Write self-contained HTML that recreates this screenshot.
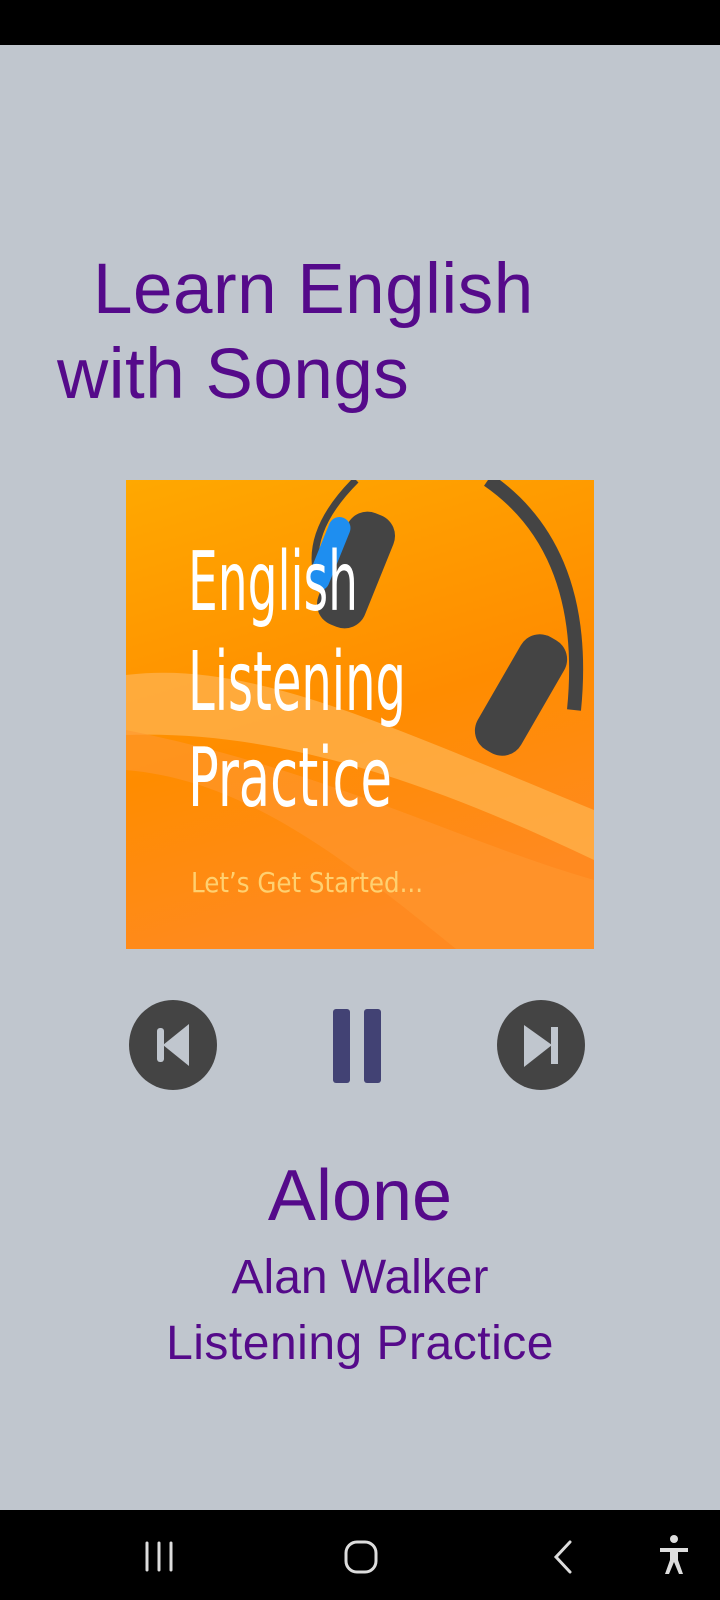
<!DOCTYPE html>
<html><head><meta charset="utf-8"><style>
body{margin:0;width:720px;height:1600px;background:#c0c6ce;position:relative;overflow:hidden;font-family:"Liberation Sans",Roboto,sans-serif;color:#550a8a}
.t{position:absolute;white-space:nowrap;line-height:1}
</style></head><body>
<div style="position:absolute;left:0;top:0;width:720px;height:45px;background:#000"></div>
<div class="t" style="left:93px;top:254px;font-size:71px;letter-spacing:0.5px">Learn English</div>
<div class="t" style="left:57px;top:339px;font-size:71px;letter-spacing:0.5px">with Songs</div>

<svg style="position:absolute;left:126px;top:480px" width="468" height="469" viewBox="0 0 468 469">
<defs><linearGradient id="g" x1="0" y1="0" x2="0.3" y2="1"><stop offset="0" stop-color="#ffa800"/><stop offset="0.6" stop-color="#ff8c00"/><stop offset="1" stop-color="#ff8a20"/></linearGradient></defs>
<rect width="468" height="469" fill="url(#g)"/>
<path d="M0 195 C120 180 250 240 468 330 L468 380 C300 300 150 250 0 255Z" fill="#ffb04a" opacity="0.8"/>
<path d="M0 290 C120 300 220 380 330 469 L468 469 L468 400 C330 360 200 290 0 250Z" fill="#ff9830" opacity="0.6"/>
<path d="M230 0 C200 30 185 60 190 90" stroke="#444" stroke-width="7" fill="none"/>
<path d="M362 0 C420 40 460 110 448 230" stroke="#444" stroke-width="14" fill="none"/>
<rect x="205" y="30" width="50" height="120" rx="22" fill="#444" transform="rotate(22 230 90)"/>
<rect x="192" y="35" width="22" height="78" rx="11" fill="#1e8ef0" transform="rotate(22 203 74)"/>
<rect x="370" y="150" width="50" height="130" rx="22" fill="#444" transform="rotate(30 395 215)"/>
<text x="62" y="130" font-family="DejaVu Sans Condensed,Liberation Sans Narrow,sans-serif" font-size="82" fill="#fff" textLength="170" lengthAdjust="spacingAndGlyphs">English</text>
<text x="62" y="230" font-family="DejaVu Sans Condensed,Liberation Sans Narrow,sans-serif" font-size="82" fill="#fff" textLength="218" lengthAdjust="spacingAndGlyphs">Listening</text>
<text x="62" y="326" font-family="DejaVu Sans Condensed,Liberation Sans Narrow,sans-serif" font-size="82" fill="#fff" textLength="204" lengthAdjust="spacingAndGlyphs">Practice</text>
<text x="65" y="412" font-family="DejaVu Sans Condensed,Liberation Sans,sans-serif" font-size="28" fill="#ffd070" textLength="232" lengthAdjust="spacingAndGlyphs">Let’s Get Started...</text>
</svg>

<svg style="position:absolute;left:0;top:990px" width="720" height="115">
<ellipse cx="173" cy="55" rx="44" ry="45" fill="#444"/>
<rect x="157" y="38" width="7" height="34" rx="3" fill="#c0c6ce"/>
<path d="M163 55 L189 34 L189 76Z" fill="#c0c6ce"/>
<rect x="333" y="19" width="17" height="74" rx="3" fill="#424274"/>
<rect x="364" y="19" width="17" height="74" rx="3" fill="#424274"/>
<ellipse cx="541" cy="55" rx="44" ry="45" fill="#444"/>
<rect x="551" y="37" width="7" height="37" fill="#c0c6ce"/>
<path d="M524 35 L552 55 L524 77Z" fill="#c0c6ce"/>
</svg>

<div class="t" style="left:0;width:720px;text-align:center;top:1160px;font-size:72px">Alone</div>
<div class="t" style="left:0;width:720px;text-align:center;top:1254px;font-size:48px">Alan Walker</div>
<div class="t" style="left:0;width:720px;text-align:center;top:1320px;font-size:48px;letter-spacing:0.5px">Listening Practice</div>

<div style="position:absolute;left:0;top:1510px;width:720px;height:90px;background:#000"></div>
<svg style="position:absolute;left:0;top:1510px" width="720" height="90">
<g stroke="#ddd" stroke-width="3" fill="none" stroke-linecap="round">
<path d="M147 33V60M159 33V60M171 33V60"/>
<rect x="346" y="32" width="30" height="30" rx="11"/>
<path d="M570 32L556 47L570 62"/>
</g>
<g fill="#ddd"><circle cx="674" cy="29" r="4"/><path d="M660 38h28v4h-10v8l5 14h-4l-5-12-5 12h-4l5-14v-8h-10z"/></g>
</svg>
</body></html>
